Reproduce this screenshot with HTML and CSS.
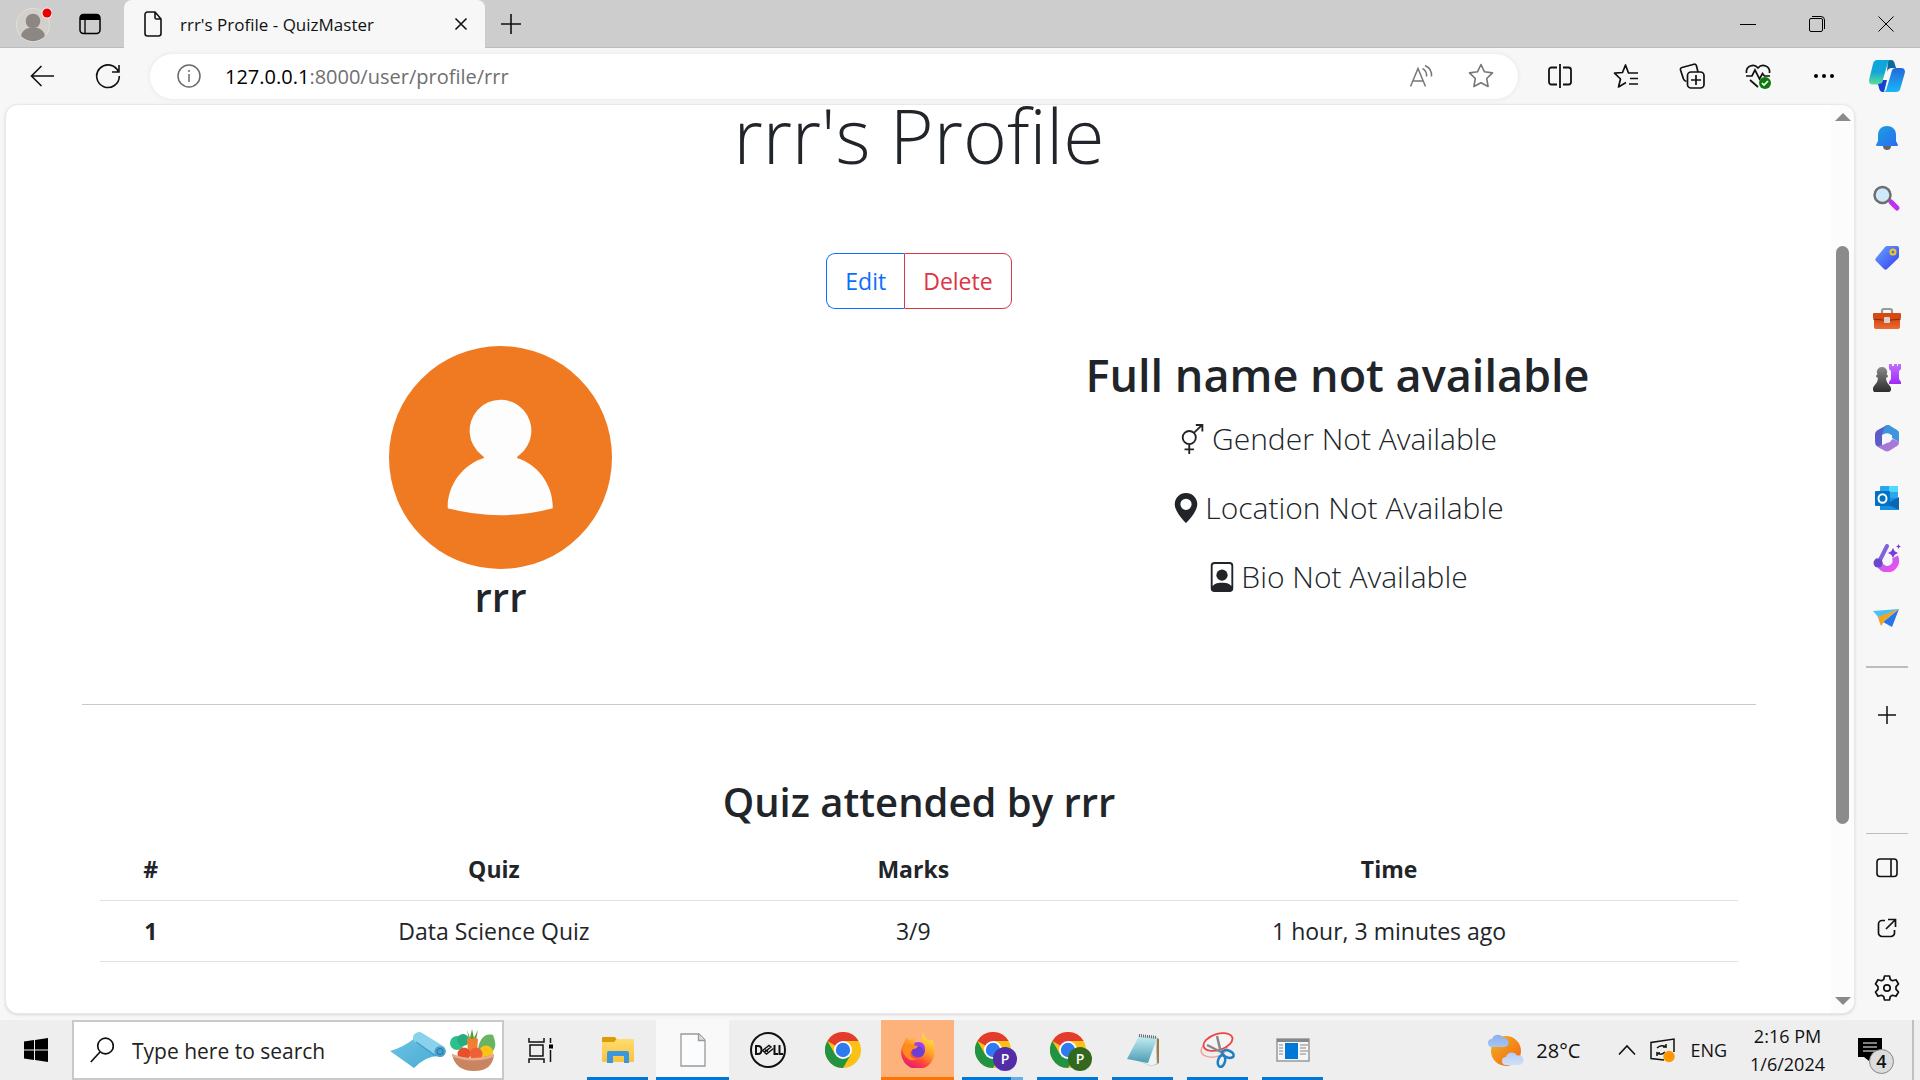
FILE: index.html
```html
<!DOCTYPE html>
<html lang="en">
<head>
<meta charset="utf-8">
<title>rrr's Profile - QuizMaster</title>
<link rel="stylesheet" href="styles.css">
</head>
<body>
<svg class="defs" width="0" height="0" aria-hidden="true">
  <defs>
    <linearGradient id="bell" x1="0" y1="0" x2="1" y2="1"><stop offset="0" stop-color="#1aa0e0"/><stop offset="1" stop-color="#2b6df0"/></linearGradient>
    <linearGradient id="violet" x1="0" y1="0" x2="0" y2="1"><stop offset="0" stop-color="#c070ff"/><stop offset="1" stop-color="#a028f8"/></linearGradient>
    <linearGradient id="tag" x1="0" y1="0" x2="1" y2="1"><stop offset="0" stop-color="#6aa8ff"/><stop offset="1" stop-color="#3438f4"/></linearGradient>
    <linearGradient id="box" x1="0" y1="0" x2="0" y2="1"><stop offset="0" stop-color="#c03a10"/><stop offset="1" stop-color="#ee6a2c"/></linearGradient>
    <linearGradient id="pawn" x1="0" y1="0" x2="0" y2="1"><stop offset="0" stop-color="#8a8a8a"/><stop offset="1" stop-color="#2c2c2c"/></linearGradient>
    <linearGradient id="copA" x1="0" y1="0" x2="0" y2="1"><stop offset="0" stop-color="#0ca6e0"/><stop offset=".5" stop-color="#14a6d8"/><stop offset="1" stop-color="#5ee090"/></linearGradient>
    <linearGradient id="copB" x1="0" y1="0" x2="0" y2="1"><stop offset="0" stop-color="#2468d8"/><stop offset="1" stop-color="#18b8f8"/></linearGradient>
    <linearGradient id="magic" x1="0" y1="0" x2="1" y2="1"><stop offset="0" stop-color="#a06cf0"/><stop offset="1" stop-color="#f04cf0"/></linearGradient>
    <linearGradient id="folder" x1="0" y1="0" x2="0" y2="1"><stop offset="0" stop-color="#ffdc70"/><stop offset="1" stop-color="#f8c23c"/></linearGradient>
    <linearGradient id="sun" x1="0" y1="0" x2="1" y2="1"><stop offset="0" stop-color="#f0b428"/><stop offset="1" stop-color="#f4620c"/></linearGradient>
    <linearGradient id="cloud" x1="0" y1="0" x2="0" y2="1"><stop offset="0" stop-color="#8ab0ee"/><stop offset="1" stop-color="#d0e0fa"/></linearGradient>
    <linearGradient id="fire" x1=".8" y1="0" x2=".3" y2="1"><stop offset="0" stop-color="#fff04a"/><stop offset=".5" stop-color="#ff9422"/><stop offset=".75" stop-color="#ff4040"/><stop offset="1" stop-color="#e01878"/></linearGradient>
    <linearGradient id="note" x1="0" y1="0" x2="0" y2="1"><stop offset="0" stop-color="#c8eef4"/><stop offset="1" stop-color="#4a9cb4"/></linearGradient>
    <linearGradient id="mat" x1="0" y1="0" x2="1" y2="1"><stop offset="0" stop-color="#6cc4e6"/><stop offset="1" stop-color="#4aaad2"/></linearGradient>
    <symbol id="chrome" viewBox="0 0 36 36">
      <circle cx="18" cy="18" r="18" fill="#fbc116"/>
      <path d="M18 18 2.400 9A18 18 0 0 1 33.600 9H18z" fill="#e33b2e"/>
      <path d="M2.400 9A18 18 0 0 0 18 36l7.800-13.500L18 18 10.200 22.500z" fill="#229342"/>
      <circle cx="18" cy="18" r="9" fill="#fff"/><circle cx="18" cy="18" r="7.200" fill="#2f7aee"/>
    </symbol>
  </defs>
</svg>

<header class="tabbar">
  <button class="bare profile" aria-label="Profile"><svg width="36" height="36" viewBox="0 0 36 36"><circle cx="17" cy="19" r="16.500" fill="#d3d0cb" stroke="#e2e0dc"/><circle cx="17" cy="15" r="7.300" fill="#8c8783"/><path d="M5 30c1-6 6-8.500 12-8.500S28 24 29 30a16.500 16.500 0 0 1-24 0z" fill="#8c8783"/><circle cx="31" cy="7" r="5.500" fill="#f3f3f3"/><circle cx="31" cy="7" r="4.500" fill="#e60000"/></svg></button>
  <button class="bare tabs-menu" aria-label="Tab actions"><svg width="22" height="22" viewBox="0 0 22 22"><rect x="1" y="1.500" width="20" height="19" rx="3.500" fill="none" stroke="#000" stroke-width="1.500"/><path d="M1 7V5a4 4 0 0 1 4-4h12a4 4 0 0 1 4 4v2z"/><path d="M6 7v13" stroke="#000" stroke-width="1.300"/></svg></button>
  <div class="tab">
    <svg width="18" height="26" viewBox="0 0 18 26" fill="none" stroke="#111" stroke-width="1.600" stroke-linejoin="round"><path d="M3.500 1H11l6 7v14.500a2.500 2.500 0 0 1-2.500 2.500h-11A2.500 2.500 0 0 1 1 22.500v-19A2.500 2.500 0 0 1 3.500 1zM11 1v5.500A1.500 1.500 0 0 0 12.500 8H17"/></svg>
    <span class="tab-title">rrr's Profile - QuizMaster</span>
    <button class="bare" aria-label="Close tab"><svg width="14" height="14" viewBox="0 0 14 14" stroke="#111" stroke-width="1.600"><path d="m1.500 1.500 11 11m0-11-11 11"/></svg></button>
  </div>
  <button class="bare new-tab" aria-label="New tab"><svg width="20" height="20" viewBox="0 0 20 20" stroke="#111" stroke-width="1.600"><path d="M10 0v20M0 10h20"/></svg></button>
  <div class="window-buttons">
    <button class="bare" aria-label="Minimize"><svg width="16" height="16" viewBox="0 0 16 16" stroke="#000"><path d="M0 8.500h16"/></svg></button>
    <button class="bare" aria-label="Restore"><svg width="16" height="16" viewBox="0 0 16 16" fill="none" stroke="#000"><rect x=".5" y="2.500" width="13" height="13" rx="1.500"/><path d="M3 .5h9a3.500 3.500 0 0 1 3.500 3.500v9"/></svg></button>
    <button class="bare" aria-label="Close"><svg width="16" height="16" viewBox="0 0 16 16" stroke="#000"><path d="m.5.5 15 15m0-15-15 15"/></svg></button>
  </div>
</header>

<nav class="toolbar">
  <button class="bare back" aria-label="Back"><svg width="24" height="22" viewBox="0 0 24 22" fill="none" stroke="#111" stroke-width="1.600"><path d="M24 11H1.500M11.500 1l-10 10 10 10"/></svg></button>
  <button class="bare reload" aria-label="Reload"><svg width="26" height="26" viewBox="0 0 26 26" fill="none" stroke="#111" stroke-width="1.600"><path d="M23.500 9A11.300 11.300 0 1 0 24.300 13M24 2v7h-7"/></svg></button>
  <form class="address">
    <svg width="24" height="24" viewBox="0 0 24 24" fill="none" stroke="#6b6b6b" stroke-width="1.500"><circle cx="12" cy="12" r="11"/><path d="M12 10v8M12 6v2"/></svg>
    <a class="url" href="#"><b>127.0.0.1</b>:8000/user/profile/rrr</a>
    <button type="button" class="bare" aria-label="Read aloud"><svg width="26" height="24" viewBox="0 0 26 24" fill="none" stroke="#777" stroke-width="1.500"><path d="M1.500 22.500 9 4.500l7.500 18M4 17h10M13.500 4.500a8 8 0 0 1 4 8M16 1.500a11 11 0 0 1 6.500 11"/></svg></button>
    <button type="button" class="bare star" aria-label="Add to favorites"><svg width="26" height="26" viewBox="0 0 26 26" fill="none" stroke="#777" stroke-width="1.600" stroke-linejoin="round"><path d="m13 1.500 3.500 7.300 8 1.100-5.800 5.600 1.400 8L13 19.700l-7.100 3.800 1.400-8L1.500 9.900l8-1.100z"/></svg></button>
  </form>
  <div class="tools">
    <button class="bare" aria-label="Split screen"><svg width="26" height="26" viewBox="0 0 26 26" fill="none" stroke="#111" stroke-width="1.800"><path d="M10 4.500H4.500A2.500 2.500 0 0 0 2 7v12a2.500 2.500 0 0 0 2.500 2.500H10M13 1v24M16 4.500h5.500A2.500 2.500 0 0 1 24 7v12a2.500 2.500 0 0 1-2.500 2.500H16"/></svg></button>
    <button class="bare" aria-label="Favorites"><svg width="26" height="26" viewBox="0 0 26 26" fill="none" stroke="#111" stroke-width="1.700" stroke-linejoin="round"><path d="M25 10h-9.500L12.500 2 9.500 9.500l-8 .7 6 5.800-2 8 7.500-4.500M17 15.500h8M16 21h9"/></svg></button>
    <button class="bare" aria-label="Collections"><svg width="26" height="26" viewBox="0 0 26 26" fill="none" stroke="#111" stroke-width="1.700"><rect x="8.500" y="9" width="16.500" height="16" rx="3.500"/><path d="M17 12v10M12 17h10M19 9l-1.500-6a2 2 0 0 0-2.500-1.700L3 4.500A2 2 0 0 0 1.500 7l3 9a4 4 0 0 0 3 2.500"/></svg></button>
    <button class="bare" aria-label="Browser essentials"><svg width="26" height="26" viewBox="0 0 26 26" fill="none" stroke="#111" stroke-width="1.700"><path d="M1.500 10C.5 3 9 0 13 5c4-5 12.500-2 11.500 5M1 13h6l3-6 4.500 9 3-5.500 2 2.500H25M5 17l8 7"/><circle cx="20" cy="20" r="6" fill="#0e7a0e" stroke="none"/><path d="m17 20 2 2 4-4" stroke="#fff"/></svg></button>
    <button class="bare" aria-label="Settings and more"><svg width="26" height="26" viewBox="0 0 26 26"><circle cx="5" cy="13" r="2"/><circle cx="13" cy="13" r="2"/><circle cx="21" cy="13" r="2"/></svg></button>
  </div>
  <button class="bare copilot" aria-label="Copilot"><svg width="36" height="34" viewBox="0 0 36 34"><path d="M19 1h3c2 0 3 1 3.500 3L27 9h-4c-3 0-4 1-5 4z" fill="#0c6a98"/><path d="M8 1h14c-2 0-3 2-3.500 4l-5 17c-.8 2.500-2 3.500-4.500 3.500H4C0 25.500-.5 23 .5 19L4 5c.8-3 2-4 4-4z" fill="url(#copA)"/><path d="M9 25c3 0 4-1 5-4h4l-3 12c-2.500 0-4-.5-4.700-3z" fill="#1742d0"/><path d="M27 9h5c4 0 4.500 3 3.500 6l-4 14c-.8 3-2 4-4.500 4H14c2 0 3-1 3.500-3l5-17c.8-3 2-4 4.500-4z" fill="url(#copB)"/></svg></button>
</nav>

<div class="middle">
  <main class="page">
    <div class="content">
      <h1>rrr's Profile</h1>
      <div class="btn-group">
        <button class="btn btn-edit">Edit</button><button class="btn btn-delete">Delete</button>
      </div>
      <section class="row">
        <div class="col">
          <svg class="avatar" viewBox="0 0 224 224" role="img" aria-label="rrr"><circle cx="112" cy="112" r="112" fill="#f07a22"/><path d="M95.500 112.500c0-1-1-2-2.500-3A31 31 0 1 1 131 109.500c-1.500 1-2.500 2-2.500 3 20 6 36.500 26 36 50.500q-52 14-105.500 0c-.5-24 16-44.500 36.500-50.500z" fill="#fdfdfd"/></svg>
          <h3>rrr</h3>
        </div>
        <div class="col">
          <h2>Full name not available</h2>
          <p class="lead"><svg width="30" height="30" viewBox="0 0 16 16" fill="none" stroke="#212529"><circle cx="6" cy="7.200" r="3.500"/><path d="M8.500 4.700 12.900.500M9.500.5h3.500V4M6 10.700V16M3.500 13.500h5"/></svg> Gender Not Available</p>
          <p class="lead"><svg width="30" height="30" viewBox="0 0 16 16" fill="#212529"><path d="M8 16s6-5.686 6-10A6 6 0 0 0 2 6c0 4.314 6 10 6 10m0-7a3 3 0 1 1 0-6 3 3 0 0 1 0 6"/></svg> Location Not Available</p>
          <p class="lead"><svg width="30" height="30" viewBox="0 0 16 16" fill="#212529"><path d="M11 7a3 3 0 1 1-6 0 3 3 0 0 1 6 0"/><path fill-rule="evenodd" d="M4 0a2 2 0 0 0-2 2v12a2 2 0 0 0 2 2h8a2 2 0 0 0 2-2V2a2 2 0 0 0-2-2zm8 1a1 1 0 0 1 1 1v10.800c-.6-.9-2-1.800-5-1.800s-4.400.9-5 1.800V2a1 1 0 0 1 1-1z"/></svg> Bio Not Available</p>
        </div>
      </section>
      <hr>
      <section class="quizzes">
        <h3>Quiz attended by rrr</h3>
        <table>
          <colgroup><col class="c-num"><col class="c-quiz"><col class="c-marks"><col></colgroup>
          <thead><tr><th scope="col">#</th><th scope="col">Quiz</th><th scope="col">Marks</th><th scope="col">Time</th></tr></thead>
          <tbody><tr><th scope="row">1</th><td>Data Science Quiz</td><td>3/9</td><td>1 hour, 3 minutes ago</td></tr></tbody>
        </table>
      </section>
    </div>
    <div class="scrollbar"><i class="up"></i><div class="track"><i class="thumb"></i></div><i class="down"></i></div>
  </main>

  <aside class="sidebar">
    <button class="bare" aria-label="Notifications"><svg width="28" height="28" viewBox="0 0 28 28"><path d="M10 22h8c0 3-2 4-4 4s-4-1-4-4z" fill="#666"/><path d="M14 2c6 0 9 4 9 9v6l2 4q0 1-1 1H4q-1 0-1-1l2-4v-6c0-5 3-9 9-9z" fill="url(#bell)"/></svg></button>
    <button class="bare" aria-label="Search"><svg width="28" height="28" viewBox="0 0 28 28"><path d="m18 18 6 6" stroke="#c030f0" stroke-width="5" stroke-linecap="round"/><circle cx="9.500" cy="11" r="8" fill="#cfe9fb" stroke="#6e6e6e" stroke-width="2.500"/></svg></button>
    <button class="bare" aria-label="Shopping"><svg width="28" height="28" viewBox="0 0 28 28"><path d="M14 2h10q2 0 2 2v8q0 1.500-1 2.500L14 25q-1.500 1.500-3 0L3 17q-1.500-1.500 0-3L12 3q1-1 2-1z" fill="url(#tag)"/><circle cx="20" cy="8" r="2.500" fill="#3f78e8" stroke="#f6c914" stroke-width="2"/></svg></button>
    <button class="bare" aria-label="Tools"><svg width="28" height="28" viewBox="0 0 28 28"><path d="M9 10V7q0-2 2-2h6q2 0 2 2v3" fill="none" stroke="#999" stroke-width="2.200"/><rect x="1" y="10" width="26" height="15" rx="2" fill="url(#box)"/><path d="M0 10q0-1 1-1h26q1 0 1 1v4q-14 4-28 0z" fill="#d84a10"/><path d="M0 15q14 3 28 0" stroke="#8e2a06" stroke-width="1" fill="none"/><rect x="11" y="13" width="6" height="6" rx="1" fill="#d4d4d4"/></svg></button>
    <button class="bare" aria-label="Games"><svg width="28" height="28" viewBox="0 0 28 28"><path d="M16 0h3v2h2V0h3v2h1V0h3v5l-2 2v8l2 3v2H16v-2l2-3V7l-2-2z" fill="url(#violet)"/><path d="M9 3a5 5 0 0 1 4.500 7.500c2 .5 2 3-.5 3.500.5 4 1.500 5 4 8 2 2.500 1 6-1 6H2c-2 0-3-3.500-1-6 2.500-3 3.500-4 4-8-2.500-.5-2.500-3-.5-3.500A5 5 0 0 1 9 3z" fill="url(#pawn)"/></svg></button>
    <button class="bare" aria-label="Microsoft 365"><svg width="28" height="28" viewBox="0 0 28 28"><path d="M14 1 4 6.500Q2 8 2 10v8q0 3 2.500 4.500L9 25V11l7-4V1z" fill="#5b5ec4"/><path d="M4.500 22.500 12 27q2 .8 4 0l8-5q2-1 2-4l-6-3-8 5z" fill="#a878d8"/><path d="m12 2 2-1h2l8 5q2 1 2 3v9l-7-4V11l-10-1z" fill="#3f94e0"/><circle cx="14" cy="14" r="4.800" fill="#f7f7f7"/></svg></button>
    <button class="bare" aria-label="Outlook"><svg width="28" height="28" viewBox="0 0 28 28"><rect x="7" y="2" width="18" height="12" rx="1" fill="#28a8ea"/><path d="M16 2h9v6h-9z" fill="#50d9ff"/><path d="M7 14h19v10q0 2-2 2H7z" fill="#1490df"/><path d="m26 13-12 7 12 6z" fill="#0f63b0"/><rect x="2" y="7" width="15" height="15" rx="1" fill="#0072c6"/><ellipse cx="9.500" cy="14.500" rx="4" ry="4.300" fill="none" stroke="#fff" stroke-width="2"/></svg></button>
    <button class="bare" aria-label="Image Creator"><svg width="28" height="28" viewBox="0 0 28 28"><path d="M6 15a8.500 8.500 0 1 0 16-2" fill="none" stroke="url(#magic)" stroke-width="6.500"/><path d="m14 2-8 16" stroke="#7f62dc" stroke-width="4" stroke-linecap="round"/><circle cx="5" cy="19" r="4.500" fill="#6a48c8"/><path d="m20 4 1.700 3.300L25 9l-3.300 1.700L20 14l-1.700-3.300L15 9l3.300-1.700zM25.500 0l.8 1.700 1.700.8-1.700.8-.8 1.700-.8-1.700-1.700-.8 1.700-.8z" fill="#7a38e0"/></svg></button>
    <button class="bare" aria-label="Drop"><svg width="28" height="28" viewBox="0 0 28 28"><path d="m0 7 26-2-20 8z" fill="#4cc0f6"/><path d="M26 5 19 23l-9-5z" fill="#2a74ea"/><path d="m0 7 6 6L26 5 11 16l-3 5-3-8z" fill="#38a8f4"/><path d="m26 5-21 8 3 9 4-6z" fill="#f4a41c"/></svg></button>
    <i class="rule thick"></i>
    <button class="bare" aria-label="Customize"><svg width="18" height="18" viewBox="0 0 18 18" stroke="#111" stroke-width="1.500"><path d="M9 0v18M0 9h18"/></svg></button>
    <i class="rule low"></i>
    <button class="bare" aria-label="Hide sidebar"><svg width="22" height="20" viewBox="0 0 22 20" fill="none" stroke="#111" stroke-width="1.600"><rect x="1" y="1" width="20" height="17.500" rx="3"/><path d="M15 1v17.500"/></svg></button>
    <button class="bare" aria-label="Open in new window"><svg width="20" height="20" viewBox="0 0 20 20" fill="none" stroke="#111" stroke-width="1.700"><path d="M8 2.500H5A3.500 3.500 0 0 0 1.500 6v9A3.500 3.500 0 0 0 5 18.500h9a3.500 3.500 0 0 0 3.500-3.500v-3M9 11l9.500-9.500M11 1.500h7.500V9"/></svg></button>
    <button class="bare" aria-label="Settings"><svg width="26" height="26" viewBox="0 0 26 26" fill="none" stroke="#111" stroke-width="1.700" stroke-linejoin="round"><circle cx="13" cy="13" r="3.200"/><path d="M10.500 1h5l.8 3.500 2.200 1.200 3.500-1L24.500 9 22 11.700v2.600l2.500 2.700-2.500 4.300-3.500-1-2.200 1.200-.8 3.500h-5l-.8-3.500-2.200-1.200-3.500 1L1.500 17 4 14.300v-2.600L1.500 9 4 4.700l3.500 1 2.200-1.200z"/></svg></button>
  </aside>
</div>

<footer class="taskbar">
  <button class="bare start" aria-label="Start"><svg width="24" height="24" viewBox="0 0 24 24"><path d="M0 3.500 10 2v9.500H0zM11 1.900 24 0v11.500H11zM0 12.500h10V22L0 20.500zM11 12.500h13V24l-13-1.900z"/></svg></button>
  <form class="search">
    <svg width="24" height="26" viewBox="0 0 24 26" fill="none" stroke="#111" stroke-width="1.700"><circle cx="15.500" cy="9" r="7.800"/><path d="M10 15 .8 25"/></svg>
    <input type="text" placeholder="Type here to search" aria-label="Type here to search">
    <svg width="56" height="38" viewBox="0 0 56 38"><path d="M0 20q14-4 25-13l23 18q-12 0-24 12z" fill="url(#mat)"/><path d="M29 7 50 20" stroke="#8ad2ec" stroke-width="12" stroke-linecap="round"/><path d="M26 11 46 25" stroke="#3f9cc6" stroke-width="1.500"/><circle cx="50" cy="20.500" r="5.500" fill="#4aa2cc"/><circle cx="50" cy="20.500" r="3" fill="none" stroke="#2373a4"/></svg>
    <svg class="basket" width="46" height="42" viewBox="0 0 46 42"><circle cx="7" cy="14" r="7" fill="#2ec08a"/><circle cx="13" cy="11" r="6" fill="#28ac7c"/><path d="M28 20c2-12 8-16 15-14 2 6 4 10 0 16z" fill="#68b460"/><path d="M17 1l3 8 2-9 2 9 4-8-2 10h-7z" fill="#5a9c30"/><path d="M17 10q2-2 5 0 3-2 6 0l-1 13h-9z" fill="#f08030"/><ellipse cx="36" cy="23" rx="7" ry="6.500" fill="#fbc318"/><circle cx="14" cy="25" r="6.500" fill="#e6502c"/><circle cx="26" cy="25" r="6.500" fill="#f06038"/><path d="M2 25q20 8 42 0-1 17-20 17T2 25z" fill="#c98462"/><path d="M2 25q20 8 42 0v3q-20 7-41 0z" fill="#e8ac88"/></svg>
  </form>
  <button class="bare taskview" aria-label="Task view"><svg width="26" height="26" viewBox="0 0 26 26" fill="none" stroke="#111" stroke-width="1.500"><rect x="2" y="8" width="13" height="11"/><path d="M1 1v4h15V1M1 26v-4h15v4M22.500 1v5M22.500 13v12"/><path d="M21 7.500h4v4h-4z" fill="#000" stroke="none"/></svg></button>
  <div class="apps">
    <button class="bare app run" aria-label="File Explorer"><svg width="34" height="30" viewBox="0 0 34 30"><path d="M1 3q0-1 1-1h12l2 3h-1l-1 2H1z" fill="#dd9b04"/><path d="M1 7h12l3-3h16q1 0 1 1v21q0 1-1 1H2q-1 0-1-1z" fill="url(#folder)"/><path d="M6 28V18q0-2 2-2h18q2 0 2 2v10h-5v-7H12v7z" fill="#3a96dd"/></svg></button>
    <button class="bare app run open" aria-label="Document"><svg width="26" height="34" viewBox="0 0 26 34"><path d="M1 1h18l6 6v26H1z" fill="#fbfcfd" stroke="#999" stroke-width="1.300"/><path d="M18.500 1v6.500H25" fill="#e0e0e0" stroke="#999" stroke-width="1.300"/></svg></button>
    <button class="bare app" aria-label="Dell"><svg width="36" height="36" viewBox="0 0 36 36"><circle cx="18" cy="18" r="17" fill="none" stroke="#111" stroke-width="2"/><g fill="none" stroke="#111" stroke-width="2"><path d="M6 14v8h2q3.500 0 3.500-4t-3.500-4zM24.500 13v9H28M29.500 13v9H33"/><path d="m12.500 18.500 6.500-5 2 1.500-6.500 5zm2 2 2 1.500 7-5.500M15 18l3 1.500" stroke-width="1.400"/></g></svg></button>
    <button class="bare app" aria-label="Chrome"><svg width="36" height="36"><use href="#chrome"/></svg></button>
    <button class="bare app firefox" aria-label="Firefox"><svg width="34" height="36" viewBox="0 0 34 36"><path d="M22 0c1 5 4 7 6 9q2 0 3-2 3 6 2.500 13A16.700 16.700 0 1 1 3 11L5 5l4 3 6-2-1 4 6 2q1-6 2-12z" fill="url(#fire)"/><circle cx="17" cy="18.500" r="7" fill="#6b3fd4"/><path d="M13 11q7-3 10 2 2 4 0 6-3-6-8-5z" fill="#a03cf0"/><path d="M2 14q6-4 10-1l5 1q-1 3-5 3-1 2-3 4 0 6 8 6-8 3-12-2-5-5-3-11z" fill="#ff8a20"/></svg></button>
    <button class="bare app run multi" aria-label="Chrome, profile P"><svg width="36" height="36"><use href="#chrome"/></svg><span class="who purple">P</span></button>
    <button class="bare app run" aria-label="Chrome, profile P"><svg width="36" height="36"><use href="#chrome"/></svg><span class="who green">P</span></button>
    <button class="bare app run" aria-label="Notepad"><svg width="34" height="34" viewBox="0 0 34 34"><path d="m31 5 2 1v24l-4 2z" fill="#9c7a44"/><path d="m30 4 1 27-6 2-16-7z" fill="#eef4f4" stroke="#b8c4c8" stroke-width=".7"/><path d="M13 3 31 5 22 30 1 26z" fill="url(#note)"/><path d="M13 2.500 31 4.500" stroke="#666" stroke-width="3" stroke-dasharray="1 1"/></svg></button>
    <button class="bare app run" aria-label="Snipping Tool"><svg width="36" height="36" viewBox="0 0 36 36" fill="none"><ellipse cx="14" cy="17" rx="13" ry="8" stroke="#f0a0a0" stroke-width="1.500" transform="rotate(-10 14 17)"/><ellipse cx="18" cy="10" rx="15" ry="8" fill="#f4f4f4" stroke="#ee4444" stroke-width="1.800" transform="rotate(-18 18 10)"/><path d="m7 13 16 8M17 4l4 17" stroke="#888" stroke-width="2.500"/><ellipse cx="28" cy="22" rx="6" ry="3.500" stroke="#1d80c4" stroke-width="2.500" transform="rotate(20 28 22)"/><ellipse cx="21.500" cy="29" rx="3.500" ry="6" stroke="#1d80c4" stroke-width="2.500" transform="rotate(15 21.500 29)"/></svg></button>
    <button class="bare app run" aria-label="Run"><svg width="34" height="24" viewBox="0 0 34 24"><path d="M1 1h32v22H1z" fill="#f5f5f5" stroke="#999" stroke-width="1.500"/><path d="M1 1h32v3H1z" fill="#888"/><path d="M9 5h13v16H9z" fill="#0078d7"/><path d="M3 7h4M3 10h4M3 13h4M3 16h4M24 7h8M24 10h6M24 13h8M24 16h6" stroke="#888" stroke-width="1.200"/></svg></button>
  </div>
  <div class="tray">
    <button class="bare weather"><svg width="36" height="34" viewBox="0 0 36 34"><circle cx="18" cy="18" r="15" fill="url(#sun)"/><path d="M4 14a4 4 0 0 1 0-8 6 6 0 0 1 11-1 4.500 4.500 0 0 1 2 9zM18 32a4 4 0 0 1 0-8 6 6 0 0 1 11-1.500 4.800 4.800 0 0 1 3 9.500z" fill="url(#cloud)"/></svg><span>28°C</span></button>
    <button class="bare" aria-label="Show hidden icons"><svg width="18" height="12" viewBox="0 0 18 12" fill="none" stroke="#111" stroke-width="1.600"><path d="m1 10.500 8-8.500 8 8.500"/></svg></button>
    <button class="bare update" aria-label="Updates"><svg width="26" height="26" viewBox="0 0 26 26" fill="none" stroke="#111" stroke-width="1.500"><path d="M14 23 1 21.500v-16L24 2v13M7 11q4-4 9-1V7M16 10h-3M15 15q-4 4-8 1v3M7 16h3"/><circle cx="19" cy="19.500" r="5.700" fill="#ff9800" stroke="none"/></svg></button>
    <span class="lang">ENG</span>
    <time class="clock" datetime="2024-01-06T14:16">2:16 PM<br>1/6/2024</time>
    <button class="bare alerts" aria-label="4 notifications"><svg width="24" height="24" viewBox="0 0 24 24"><path d="M0 0h24v19H13l-2 4-5-4H0z"/><path d="M5 5h14M5 9h14M5 13h14" stroke="#fff" stroke-width="1.200"/></svg><span class="badge">4</span></button>
  </div>
</footer>
</body>
</html>
```
FILE: styles.css
```css
* { box-sizing: border-box; }

body {
  margin: 0;
  height: 100vh;
  display: flex;
  flex-direction: column;
  overflow: hidden;
  background: #f7f7f7;
  color: #212529;
  font-family: "Open Sans", "Noto Sans", sans-serif;
  font-size: 23px;
}

.defs { position: absolute; }
svg { flex: none; display: block; }

.bare {
  border: 0;
  padding: 0;
  background: none;
  color: inherit;
  font: inherit;
  display: flex;
  align-items: center;
  justify-content: center;
  position: relative;
}

/* Tab strip */
.tabbar {
  flex: none;
  height: 48px;
  display: flex;
  align-items: center;
  padding-left: 16px;
  background: #cdcdcd;
  box-shadow: inset 0 -1px 0 #bdbdbd;
}
.tabs-menu { margin-left: 27px; }
.tab {
  align-self: stretch;
  width: 361px;
  margin-left: 23px;
  padding: 0 17px 0 20px;
  display: flex;
  align-items: center;
  gap: 18px;
  background: #f7f7f7;
  border-radius: 8px 8px 0 0;
  position: relative;
}
.tab-title { flex: 1; font-size: 17px; color: #111; }
.new-tab { margin-left: 16px; }
.window-buttons { margin-left: auto; display: flex; }
.window-buttons .bare { width: 69px; height: 48px; }

/* Toolbar */
.toolbar {
  flex: none;
  height: 56px;
  display: flex;
  align-items: center;
  padding: 0 15px 0 30px;
}
.reload { margin-left: 41px; }
.address {
  flex: 1;
  height: 45px;
  margin-left: 29px;
  padding: 0 24px 0 27px;
  display: flex;
  align-items: center;
  border-radius: 23px;
  background: #fff;
  box-shadow: 0 0 5px #e4e4e4;
}
.url { flex: 1; margin-left: 24px; font-size: 20px; color: #6f6f6f; text-decoration: none; }
.url b { font-weight: 400; color: #000; }
.star { margin-left: 33px; }
.tools { display: flex; gap: 40px; margin: 0 32px 0 29px; }

/* Web page area */
.middle { flex: 1; min-height: 0; display: flex; padding: 0 0 2px 5px; }
.page {
  flex: 1;
  min-width: 0;
  margin-bottom: 4px;
  display: flex;
  overflow: hidden;
  background: #fff;
  border: 1px solid #e8e8e8;
  border-radius: 13px;
  box-shadow: 0 1px 3px #d8d8d8;
}
.content { flex: 1; padding: 0 75px 0 76px; text-align: center; }
h1, h2, h3, p { margin: 0; }
h1 { margin-top: -20px; font-size: 75px; line-height: 100px; font-weight: 300; }
h2 { font-size: 45px; line-height: 58px; font-weight: 600; margin-bottom: 12px; }
h3 { font-size: 40px; line-height: 50px; font-weight: 600; }

.btn-group { display: flex; justify-content: center; margin-top: 68px; }
.btn {
  height: 56px;
  padding: 0 18px;
  border: 1px solid;
  background: #fff;
  font: inherit;
}
.btn-edit { color: #0d6efd; border-radius: 9px 0 0 9px; border-right: 0; }
.btn-delete { color: #dc3545; border-radius: 0 9px 9px 0; }

.row { display: flex; margin-top: 37px; }
.col { flex: 1; display: flex; flex-direction: column; align-items: center; }
.avatar { width: 223px; height: 223px; margin-bottom: 3px; }
.lead {
  display: flex;
  align-items: center;
  gap: 4px;
  margin-bottom: 24px;
  font-size: 30px;
  line-height: 45px;
  font-weight: 300;
}
hr { width: 100%; margin: 81px 0 72px; border: 0; border-top: 1px solid #c8c9ca; }

.quizzes { padding: 0 18px; }
table { width: 100%; margin-top: 12px; border-collapse: collapse; table-layout: fixed; }
th, td { height: 61px; padding: 0; border-bottom: 1px solid #dee2e6; font-weight: 400; }
th { font-weight: 700; }
.c-num { width: 6.2%; }
.c-quiz { width: 35.7%; }
.c-marks { width: 15.5%; }

.scrollbar {
  width: 23px;
  padding: 8px 0;
  display: flex;
  flex-direction: column;
  align-items: center;
  background: #fcfcfc;
}
.up, .down { border: 8px solid transparent; }
.up { border-top: 0; border-bottom-color: #8a8a8a; }
.down { border-bottom: 0; border-top-color: #8a8a8a; }
.track { flex: 1; width: 13px; padding-top: 125px; }
.thumb { display: block; height: 77%; border-radius: 7px; background: #8b8b8b; }

/* Browser sidebar */
.sidebar {
  flex: none;
  width: 65px;
  padding: 4px 2px 0 0;
  display: flex;
  flex-direction: column;
  align-items: center;
}
.sidebar .bare { width: 60px; height: 60px; flex: none; }
.rule { flex: none; width: 42px; height: 1px; background: #bdbdbd; }
.thick { height: 2px; margin: 18px 0 17px; }
.low { margin: auto 0 4px; }

/* Windows taskbar */
.taskbar { flex: none; height: 60px; display: flex; background: #eee; color: #111; }
.start { width: 72px; }
.search {
  width: 432px;
  padding: 0 6px 0 16px;
  display: flex;
  align-items: center;
  background: #fff;
  border: 2px solid #c9c9c9;
}
.search input {
  flex: 1;
  min-width: 0;
  margin-left: 18px;
  padding: 2px 0 0;
  border: 0;
  outline: 0;
  background: none;
  font: inherit;
  font-size: 21px;
}
.search input::placeholder { color: #222; opacity: 1; }
.basket { margin-left: 4px; }
.taskview { width: 77px; padding-right: 4px; }
.apps { display: flex; gap: 2px; }
.app { width: 73px; }
.run::after, .firefox::after {
  content: "";
  position: absolute;
  inset: auto 6px 0;
  height: 3px;
  background: #0078d7;
}
.open { background: #f9f9f9; }
.open::after { inset: auto 0 0; }
.firefox { background: #fdb27c; }
.firefox::after { inset: auto 0 0; background: #ff7400; }
.multi::after { background: linear-gradient(90deg, #0078d7 49px, #66aee8 49px); }
.who {
  position: absolute;
  right: 12px;
  bottom: 9px;
  width: 24px;
  height: 24px;
  border-radius: 50%;
  color: #fff;
  font-size: 14px;
  font-weight: 600;
  line-height: 24px;
}
.purple { background: #512da8; }
.green { background: #33691e; }

.tray {
  margin: 0 6px 0 auto;
  padding-right: 30px;
  display: flex;
  align-items: center;
  border-right: 2px solid #c0c0c0;
  font-size: 18px;
}
.weather { gap: 12px; margin-right: 38px; font-size: 20px; }
.update { margin: 0 14px; }
.clock { margin: 0 33px 0 23px; line-height: 28px; text-align: center; }
.badge {
  position: absolute;
  left: 11px;
  top: 11px;
  width: 25px;
  height: 25px;
  border: 1px solid #888;
  border-radius: 50%;
  background: #dcdcdc;
  font-weight: 600;
  line-height: 23px;
}
```
